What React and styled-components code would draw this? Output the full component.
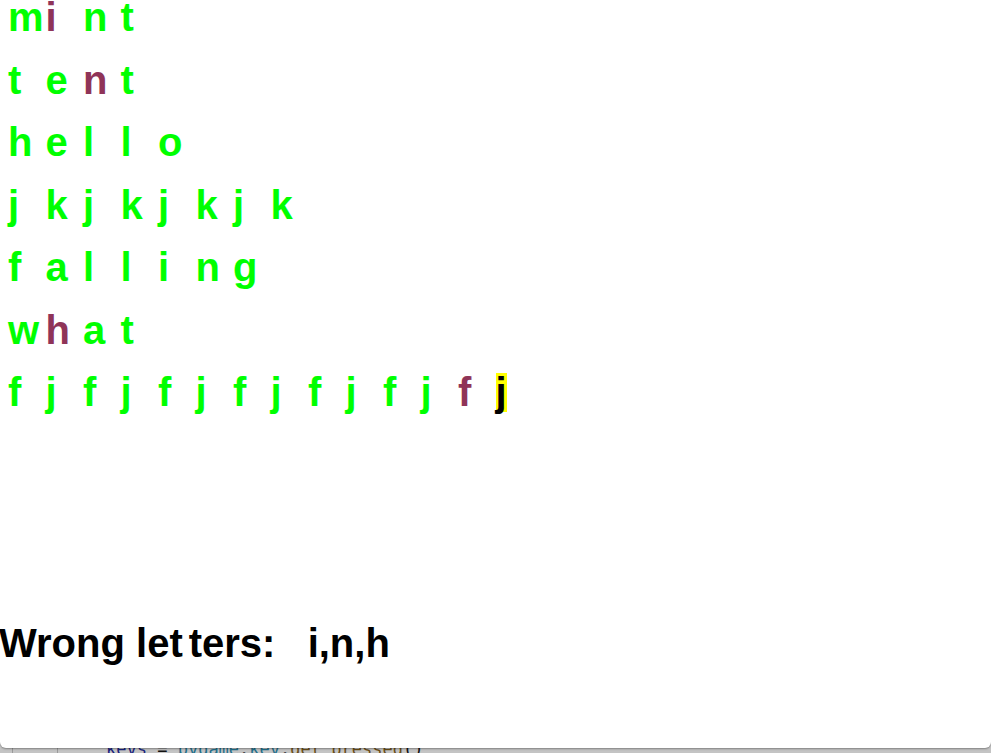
import React from 'react';
import styled, { createGlobalStyle } from 'styled-components';

const GlobalStyle = createGlobalStyle`
    html, body {
        margin: 0;
        padding: 0;
        background: #c6c6c6;
    }
`

const Screen = styled.div`
    height: 753px;
    overflow: hidden;
    background: #c6c6c6;
    font-family: "Liberation Sans", Arial, sans-serif;
`

const GameWindow = styled.div`
    position: relative;
    z-index: 1;
    height: 748px;
    background: #fff;
    border-radius: 0 0 6px 6px;
    box-shadow: 0 1px 2px rgba(0, 0, 0, 0.35);
    display: flex;
    flex-direction: column;
    overflow: hidden;
`

const Board = styled.div`
    display: flex;
    flex-direction: column;
    gap: 28.5px;
    padding-left: 8px;
`

const Row = styled.div`
    display: flex;
    height: 34px;
    line-height: 34px;
    font-size: 40px;
    font-weight: bold;
    white-space: pre;
`

const Cell = styled.span`
    width: 37.5px;
    flex: none;
    color: ${p => (p.$state === 'wrong' ? '#8f3458' : '#00ff00')};
`

const Current = styled.span`
    display: inline-block;
    background: #ffff00;
    color: #000;
    height: 39px;
    line-height: 39px;
    margin-top: -2px;
`

const Status = styled.div`
    margin-top: 217px;
    margin-left: -1px;
    font-size: 40px;
    font-weight: bold;
    line-height: 34px;
    color: #000;
    white-space: pre;
`

const Kern = styled.span`
    margin-right: 6px;
`

const Wrong = styled.span`
    margin-left: 10px;
`

const EditorStrip = styled.div`
    height: 5px;
    display: flex;
    overflow: hidden;
    background: #c4c4c4;
`

const Gutter = styled.div`
    width: 12px;
    border-right: 1px solid #9a9a9a;
`

const LineNumbers = styled.div`
    width: 44px;
    border-right: 1px solid #9a9a9a;
`

const Code = styled.div`
    margin-top: -9px;
    padding-left: 48px;
    font-family: "DejaVu Sans Mono", "Liberation Mono", monospace;
    font-size: 17px;
    line-height: 20px;
    white-space: pre;
    color: #111;
`

const Tok = styled.span`
    color: ${p => p.$c};
`

const words = [
    { text: 'mint', wrong: [1] },
    { text: 'tent', wrong: [2] },
    { text: 'hello', wrong: [] },
    { text: 'jkjkjkjk', wrong: [] },
    { text: 'falling', wrong: [] },
    { text: 'what', wrong: [1] },
    { text: 'fjfjfjfjfjfjfj', wrong: [12], current: 13 },
];

const App = () => (
    <Screen>
        <GlobalStyle />
        <GameWindow>
            <Board>
                {words.map((w, r) => (
                    <Row key={r}>
                        {w.text.split('').map((ch, i) => (
                            <Cell key={i} $state={w.wrong.includes(i) ? 'wrong' : 'ok'}>
                                {w.current === i ? <Current>{ch}</Current> : ch}
                            </Cell>
                        ))}
                    </Row>
                ))}
            </Board>
            <Status>
                Wrong <Kern>let</Kern>ters:  <Wrong>i,n,h</Wrong>
            </Status>
        </GameWindow>
        <EditorStrip>
            <Gutter />
            <LineNumbers />
            <Code>
                <Tok $c="#1a237e">keys</Tok> = <Tok $c="#1f6f8b">pygame</Tok>.<Tok $c="#1f6f8b">key</Tok>.<Tok $c="#6b4e16">get_pressed</Tok>()
            </Code>
        </EditorStrip>
    </Screen>
);

export default App;
